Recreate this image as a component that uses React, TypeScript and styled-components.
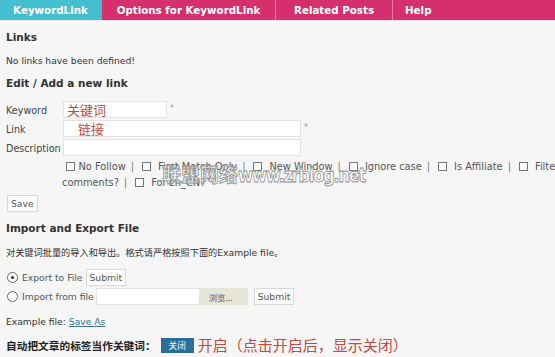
import styled, { createGlobalStyle } from "styled-components";

const GlobalStyle = createGlobalStyle`
  html, body {
    margin: 0;
    padding: 0;
    background: #f6f6f6;
    overflow: hidden;
  }
  body {
    font-family: "DejaVu Sans", Verdana, sans-serif;
    color: #333;
  }
`;

const tabs = [
  { label: "KeywordLink", width: 102, active: true },
  { label: "Options for KeywordLink", width: 174 },
  { label: "Related Posts", width: 117 },
  { label: "Help", width: 162 },
];

const checks = [
  "No Follow",
  "First Match Only",
  "New Window",
  "Ignore case",
  "Is Affiliate",
  "Filter comments?",
  "For zh_CN?",
];

export default function App() {
  return (
    <_Page>
      <GlobalStyle />
      <_TabBar>
        {tabs.map((t, i) => (
          <_Tab key={t.label} $active={!!t.active} $width={t.width} $last={i === tabs.length - 1}>
            {t.label}
          </_Tab>
        ))}
      </_TabBar>
      <_Body>
        <_Heading $top={9}>Links</_Heading>
        <_Note $top={10}>No links have been defined!</_Note>
        <_Heading $top={9}>Edit / Add a new link</_Heading>

        <_Form>
          <_Label>Keyword</_Label>
          <_FieldRow>
            <_Input $width={104}>
              <_RedText $indent={3}>关键词</_RedText>
            </_Input>
            <_Star>*</_Star>
          </_FieldRow>
          <_Label>Link</_Label>
          <_FieldRow>
            <_Input $width={238}>
              <_RedText $indent={14}>链接</_RedText>
            </_Input>
            <_Star>*</_Star>
          </_FieldRow>
          <_Label>Description</_Label>
          <_FieldRow>
            <_Input $width={238} />
          </_FieldRow>
        </_Form>

        <_Checks>
          {checks.map((c, i) => (
            <span key={c}>
              {i > 0 && <_Sep>|</_Sep>}
              <_Box $first={i === 0} />
              {c}
            </span>
          ))}
        </_Checks>

        <_Button $top={4}>Save</_Button>

        <_Heading $top={9}>Import and Export File</_Heading>
        <_Note $top={11}>对关键词批量的导入和导出。格式请严格按照下面的Example file。</_Note>

        <_RadioRow $top={10}>
          <_Radio $checked />
          Export to File
          <_Button $top={0}>Submit</_Button>
        </_RadioRow>
        <_RadioRow $top={2}>
          <_Radio />
          Import from file
          <_FileBox>
            <_FileField />
            <_Browse>浏览...</_Browse>
          </_FileBox>
          <_Button $top={0}>Submit</_Button>
        </_RadioRow>

        <_Note $top={10}>
          Example file: <_Link>Save As</_Link>
        </_Note>

        <_ToggleRow>
          <_ToggleLabel>自动把文章的标签当作关键词：</_ToggleLabel>
          <_Toggle>关闭</_Toggle>
          <_RedNote>开启（点击开启后，显示关闭）</_RedNote>
        </_ToggleRow>
      </_Body>
      <_Watermark>
        联盟网络<_MarkLatin>www.zrblog.net</_MarkLatin>
      </_Watermark>
    </_Page>
  );
}

const _Page = styled.div`
  position: relative;
  width: 555px;
  height: 357px;
  overflow: hidden;
  background: #f6f6f6;
`;

const _TabBar = styled.div`
  display: flex;
  height: 20px;
  background: #d52f6c;
  border-bottom: 1px solid #e9e9e9;
`;

const _Tab = styled.div<{ $active: boolean; $width: number; $last: boolean }>`
  width: ${({ $width }) => $width}px;
  flex: none;
  display: flex;
  align-items: center;
  justify-content: ${({ $last }) => ($last ? "flex-start" : "center")};
  padding-left: ${({ $last }) => ($last ? "12px" : "0")};
  box-sizing: border-box;
  background: ${({ $active }) => ($active ? "#44bfcf" : "#d52f6c")};
  border-right: ${({ $last }) => ($last ? "none" : "1px solid #e77aa1")};
  color: #fff;
  font-weight: bold;
  font-size: 10.3px;
`;

const _Body = styled.div`
  padding: 0 6px;
`;

const _Heading = styled.div<{ $top: number }>`
  margin-top: ${({ $top }) => $top}px;
  font-weight: bold;
  font-size: 10.5px;
  color: #333;
  line-height: 14px;
`;

const _Note = styled.div<{ $top: number }>`
  margin-top: ${({ $top }) => $top}px;
  font-size: 9.2px;
  line-height: 13px;
  color: #333;
  font-family: "DejaVu Sans", "Noto Sans CJK SC", sans-serif;
  white-space: nowrap;
`;

const _Form = styled.div`
  margin-top: 11px;
  display: grid;
  grid-template-columns: 57px 1fr;
  row-gap: 2px;
  align-items: center;
`;

const _Label = styled.div`
  font-size: 9.6px;
  color: #444;
  padding-top: 2px;
`;

const _FieldRow = styled.div`
  display: flex;
  align-items: flex-start;
  gap: 3px;
`;

const _Input = styled.div<{ $width?: number }>`
  width: ${({ $width }) => $width ?? 104}px;
  height: 17px;
  box-sizing: border-box;
  background: #fff;
  border: 1px solid #e3e3e3;
  display: flex;
  align-items: center;
  overflow: hidden;
`;

const _RedText = styled.span<{ $indent: number }>`
  padding-left: ${({ $indent }) => $indent}px;
  color: #c8473e;
  font-size: 13px;
  font-family: "Noto Sans CJK SC", sans-serif;
  line-height: 15px;
`;

const _Star = styled.span`
  font-size: 8px;
  color: #999;
  line-height: 10px;
  margin-top: 3px;
`;

const _Checks = styled.div`
  margin-top: 3px;
  width: 530px;
  padding-left: 56px;
  text-indent: 3.5px;
  font-size: 9.8px;
  line-height: 16px;
  color: #555;
`;

const _Sep = styled.span`
  margin: 0 8px 0 5px;
  color: #777;
`;

const _Box = styled.span<{ $first: boolean }>`
  display: inline-block;
  width: 7px;
  height: 7px;
  border: 1px solid #777;
  background: #fff;
  vertical-align: -1px;
  margin-right: ${({ $first }) => ($first ? 4 : 7)}px;
  text-indent: 0;
`;

const _Button = styled.span<{ $top: number }>`
  display: inline-flex;
  align-items: center;
  height: 17px;
  box-sizing: border-box;
  margin-top: ${({ $top }) => $top}px;
  padding: 0 3px;
  border: 1px solid #d8d8d8;
  background: #fff;
  color: #555;
  font-size: 9.2px;
  margin-left: 1px;
`;

const _RadioRow = styled.div<{ $top: number }>`
  margin-top: ${({ $top }) => $top}px;
  display: flex;
  align-items: center;
  gap: 2px;
  font-size: 9.2px;
  color: #555;
  height: 17px;
`;

const _Radio = styled.span<{ $checked?: boolean }>`
  width: 9px;
  height: 9px;
  border-radius: 50%;
  border: 1px solid #666;
  background: #fff;
  display: inline-flex;
  align-items: center;
  justify-content: center;
  margin-left: 1px;
  margin-right: 2px;
  &::after {
    content: "";
    width: 3px;
    height: 3px;
    border-radius: 50%;
    background: ${({ $checked }) => ($checked ? "#333" : "transparent")};
  }
`;

const _FileBox = styled.div`
  display: flex;
  height: 17px;
  margin: 0 3px 0 0;
`;

const _FileField = styled.div`
  width: 104px;
  background: #fff;
  border: 1px solid #e3e3e3;
  box-sizing: border-box;
`;

const _Browse = styled.div`
  width: 48px;
  background: #e8e5d9;
  color: #555;
  font-size: 8.4px;
  font-family: "Noto Sans CJK SC", sans-serif;
  display: flex;
  align-items: center;
  padding-left: 9px;
  box-sizing: border-box;
`;

const _Link = styled.span`
  color: #3b7391;
  text-decoration: underline;
`;

const _ToggleRow = styled.div`
  margin-top: 8px;
  display: flex;
  align-items: center;
  height: 18px;
`;

const _ToggleLabel = styled.span`
  font-weight: bold;
  font-size: 10.7px;
  color: #222;
  font-family: "Noto Sans CJK SC", sans-serif;
`;

const _Toggle = styled.span`
  margin-left: 5px;
  width: 33px;
  height: 15px;
  background: #2b6f99;
  color: #fff;
  font-size: 8.6px;
  display: flex;
  align-items: center;
  justify-content: center;
  font-family: "Noto Sans CJK SC", sans-serif;
`;

const _RedNote = styled.span`
  margin-left: 4px;
  color: #c8473e;
  font-size: 15px;
  line-height: 18px;
  font-family: "Noto Sans CJK SC", sans-serif;
  white-space: nowrap;
`;

const _Watermark = styled.div`
  position: absolute;
  left: 162px;
  top: 160px;
  font-size: 19px;
  line-height: 28px;
  font-weight: bold;
  font-family: "Noto Sans CJK SC", "DejaVu Sans", sans-serif;
  color: rgba(255, 255, 255, 0.55);
  -webkit-text-stroke: 0.8px #8a8a8a;
  white-space: nowrap;
  pointer-events: none;
`;

const _MarkLatin = styled.span`
  display: inline-block;
  font-family: "DejaVu Sans", sans-serif;
  font-size: 20px;
  letter-spacing: -1.6px;
  transform: scaleX(0.82);
  transform-origin: left center;
`;
